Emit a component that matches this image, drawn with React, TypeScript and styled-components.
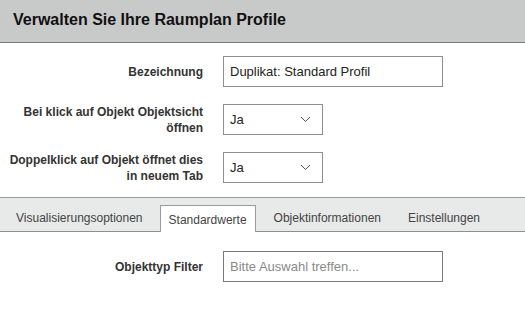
import styled, { createGlobalStyle } from 'styled-components';

const GlobalStyle = createGlobalStyle`
  html, body {
    margin: 0;
    padding: 0;
    background: #ffffff;
    font-family: "Liberation Sans", Arial, sans-serif;
    color: #333;
  }
  * {
    box-sizing: border-box;
  }
`;

const TABS = [
  'Visualisierungsoptionen',
  'Standardwerte',
  'Objektinformationen',
  'Einstellungen',
];

function Chevron() {
  return (
    <svg width="11" height="7" viewBox="0 0 11 7">
      <path d="M1 1 L5.5 5.5 L10 1" fill="none" stroke="#555" strokeWidth="1" />
    </svg>
  );
}

interface SelectBoxProps {
  value: string;
}

function SelectBox({ value }: SelectBoxProps) {
  return (
    <Select>
      <span>{value}</span>
      <Chevron />
    </Select>
  );
}

export default function App() {
  return (
    <>
      <GlobalStyle />
      <Page>
        <Header>
          <Title>Verwalten Sie Ihre Raumplan Profile</Title>
        </Header>

        <Form>
          <Row>
            <Label>Bezeichnung</Label>
            <TextInput>Duplikat: Standard Profil</TextInput>
          </Row>
          <Row>
            <Label>Bei klick auf Objekt Objektsicht öffnen</Label>
            <SelectBox value="Ja" />
          </Row>
          <Row>
            <Label>Doppelklick auf Objekt öffnet dies in neuem Tab</Label>
            <SelectBox value="Ja" />
          </Row>
        </Form>

        <TabBar>
          {TABS.map((tab) => (
            <Tab key={tab} active={tab === 'Standardwerte'}>
              {tab}
            </Tab>
          ))}
        </TabBar>

        <TabContent>
          <Row>
            <Label>Objekttyp Filter</Label>
            <TextInput placeholder dark>
              Bitte Auswahl treffen...
            </TextInput>
          </Row>
        </TabContent>
      </Page>
    </>
  );
}

const Page = styled.div`
  width: 525px;
  min-height: 317px;
  display: flex;
  flex-direction: column;
`;

const Header = styled.div`
  height: 43px;
  background: #c8c9c9;
  border-bottom: 1px solid #7c7c7c;
  display: flex;
  align-items: center;
  padding: 0 13px 2px;
`;

const Title = styled.h1`
  margin: 0;
  font-size: 16px;
  font-weight: bold;
  color: #111;
`;

const Form = styled.div`
  display: flex;
  flex-direction: column;
  gap: 17px;
  padding: 13px 0 14px;
`;

const Row = styled.div`
  display: grid;
  grid-template-columns: 203px auto;
  grid-template-rows: 31px;
  column-gap: 20px;
  align-items: center;
`;

const Label = styled.div`
  padding-left: 8px;
  text-align: right;
  font-size: 12px;
  font-weight: bold;
  line-height: 16px;
  color: #333;
`;

const TextInput = styled.div<{ placeholder?: boolean; dark?: boolean }>`
  width: 220px;
  height: 31px;
  border: 1px solid ${({ dark }) => (dark ? '#7a7a7a' : '#8e8e8e')};
  display: flex;
  align-items: center;
  padding: 0 6px;
  font-size: 13px;
  color: ${({ placeholder }) => (placeholder ? '#8a8a8a' : '#222')};
`;

const Select = styled.div`
  width: 100px;
  height: 31px;
  border: 1px solid #8e8e8e;
  display: flex;
  align-items: center;
  justify-content: space-between;
  padding: 0 11px 0 6px;
  font-size: 13px;
  color: #222;
`;

const TabBar = styled.div`
  height: 35px;
  background: #e8e9e9;
  border-top: 1px solid #9a9a9a;
  border-bottom: 1px solid #8e8e8e;
  display: flex;
  align-items: flex-end;
  gap: 8px;
  padding: 0 6px;
`;

const Tab = styled.div<{ active?: boolean }>`
  height: 27px;
  margin-bottom: -1px;
  padding: ${({ active }) => (active ? '2px 8px 0 8px' : '0 8px 2px 9px')};
  display: flex;
  align-items: center;
  font-size: 12px;
  color: #444;
  background: ${({ active }) => (active ? '#ffffff' : 'transparent')};
  border: 1px solid ${({ active }) => (active ? '#9a9a9a' : 'transparent')};
  border-bottom: none;
`;

const TabContent = styled.div`
  padding: 19px 0 20px;
`;
